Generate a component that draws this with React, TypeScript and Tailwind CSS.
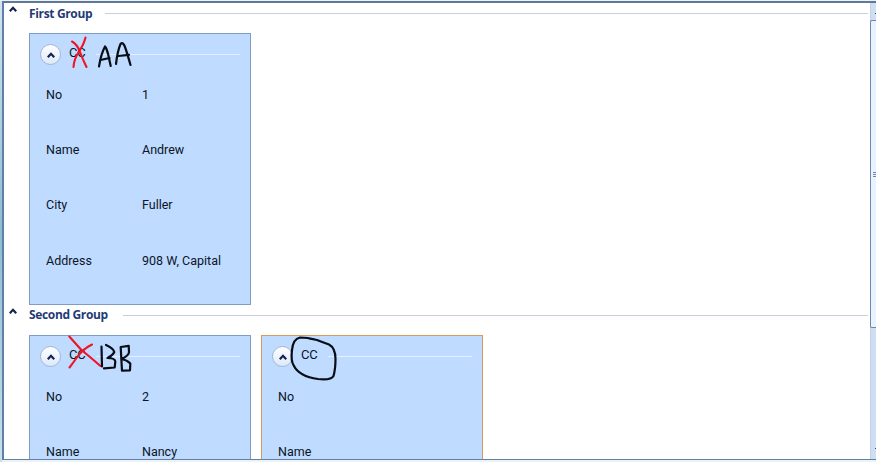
import React from "react";

type Field = {
    label: string;
    value?: string;
};

type CardProps = {
    fields: Field[];
    selected?: boolean;
};

const Chevron = (props: { className?: string }) => (
    <svg
        width="8"
        height="6"
        viewBox="0 0 8 6"
        fill="none"
        stroke="#14234f"
        strokeWidth="2.2"
        className={props.className}
    >
        <path d="M0.8 5.2L4 1.8L7.2 5.2" />
    </svg>
);

const GroupHeader = (props: { title: string; titleClass: string }) => (
    <div className="flex h-6 items-center pl-[5px] pr-px">
        <Chevron className="mb-[9px] shrink-0" />
        <h2
            className={`ml-3 shrink-0 whitespace-nowrap font-['Open_Sans','Noto_Sans',sans-serif] text-[12px] font-bold leading-4 text-[#1f3b76] ${props.titleClass}`}
        >
            {props.title}
        </h2>
        <div className="h-px grow bg-[#c9cfdc]" />
    </div>
);

const Card = (props: CardProps) => (
    <div
        className={`h-[272px] w-[222px] shrink-0 border bg-[#bfdbff] ${
            props.selected ? "border-[#dc9a58]" : "border-[#7f9dc0]"
        }`}
    >
        <div className="flex h-[41px] items-center pl-2.5 pr-2.5">
            <div className="flex size-[21px] shrink-0 items-center justify-center rounded-full border border-[#a3b7d5] bg-linear-to-b from-white to-[#dce9fa]">
                <Chevron />
            </div>
            <span className="mb-1 ml-2 w-[27px] text-[13px] leading-4 tracking-[-0.3px]">
                CC
            </span>
            <div className="h-px grow bg-[#e3efff]" />
        </div>
        <div className="pl-4">
            {props.fields.map((field) => (
                <div
                    key={field.label}
                    className="flex h-[55.2px] items-start pt-3 text-[12.5px] leading-4"
                >
                    <span className="w-24">{field.label}</span>
                    <span className="whitespace-nowrap">{field.value}</span>
                </div>
            ))}
        </div>
    </div>
);

const ScrollBar = () => (
    <div className="flex w-1.5 shrink-0 flex-col overflow-hidden bg-[#cfdef3]">
        <div className="flex h-[17px] items-center justify-end border-l border-[#c4d2e8]">
            <div className="mt-1 h-px w-px bg-[#33466f]" />
        </div>
        <div className="flex h-[308px] shrink-0 flex-col items-end justify-center gap-px rounded-l-[2px] border border-r-0 border-[#6f87a8] bg-[#e9f2ff]">
            <div className="h-px w-[3px] bg-[#7186aa]" />
            <div className="h-px w-[3px] bg-[#7186aa]" />
            <div className="h-px w-[3px] bg-[#7186aa]" />
        </div>
        <div className="flex grow items-end justify-end border-l border-[#c4d2e8] pb-2.5">
            <div className="h-px w-px bg-[#33466f]" />
        </div>
    </div>
);

// Freehand notes drawn over the cards
const Scribbles = () => (
    <svg
        className="pointer-events-none absolute left-0 top-0"
        width="876"
        height="462"
        fill="none"
        strokeLinecap="round"
        strokeLinejoin="round"
    >
        <g stroke="#f01424" strokeWidth="2.1">
            <path d="M72 41.5Q77 44 80 52T86.5 67" />
            <path d="M85.5 37.5Q84 44 79 51.5T73.5 67" />
            <path d="M69.3 336.5L81 349.5Q90 357 100.5 366" />
            <path d="M92 344.5Q83 349 78 356T69.5 367.5" />
        </g>
        <g stroke="#080d16" strokeWidth="2.2">
            <path d="M99 66.5Q101 54 105 46.5Q107 49 108.3 55T110.7 66" />
            <path d="M100.5 60L109.5 58" />
            <path d="M116 64Q117.5 51 120.5 44Q123 41.5 125 47T130.5 65" />
            <path d="M118 56L129 54.8" />
            <path d="M101.5 346.5L102 366.5" />
            <path d="M106 345Q113 348 114.3 352Q113 355 107.5 358Q115 358 115.3 361.5L114.7 367.5L104 368.3" />
            <path d="M120.7 347L121.3 358.3L122 370.7L130 370.3L130.3 363.5Q127 360 121.5 359Q129 355.5 129 352L128.7 345.8L120.7 347" />
            <path d="M315 339.5Q308 337.5 300 337.5Q293 339 292 350Q290.5 361 294 366C297 372 304 377 318 379Q331 380.5 333.5 376Q335.5 369 335.5 359Q335.5 348 329 344.5Q322 342 317 340L309 338.5" />
        </g>
    </svg>
);

const App = () => {
    return (
        <div className="relative flex h-[462px] w-[876px] overflow-hidden bg-[#edf3f5] pt-px font-[Roboto,'Liberation_Sans',sans-serif] text-[#0b1426]">
            <div className="w-0.5 shrink-0 bg-linear-to-b from-[#d2e5ee] via-[#8cbdd0] to-[#c8dfe9]" />
            <div className="flex h-[459px] grow border-b border-l-2 border-t-2 border-[#6080aa] border-t-[#60799a] bg-white">
                <main className="min-w-0 grow overflow-hidden pr-px">
                    <section className="h-[300px]">
                        <div className="-mt-0.5">
                            <GroupHeader
                                title="First Group"
                                titleClass="w-[76px] pt-px tracking-[-0.35px]"
                            />
                        </div>
                        <div className="pl-[25px] pt-2">
                            <Card
                                fields={[
                                    { label: "No", value: "1" },
                                    { label: "Name", value: "Andrew" },
                                    { label: "City", value: "Fuller" },
                                    { label: "Address", value: "908 W, Capital" },
                                ]}
                            />
                        </div>
                    </section>
                    <section className="pt-0.5">
                        <GroupHeader
                            title="Second Group"
                            titleClass="w-[94px] tracking-[-0.35px]"
                        />
                        <div className="flex gap-2.5 pl-[25px] pt-2">
                            <Card
                                fields={[
                                    { label: "No", value: "2" },
                                    { label: "Name", value: "Nancy" },
                                ]}
                            />
                            <Card
                                selected
                                fields={[{ label: "No" }, { label: "Name" }]}
                            />
                        </div>
                    </section>
                </main>
                <ScrollBar />
            </div>
            <Scribbles />
        </div>
    );
};

export default App;
